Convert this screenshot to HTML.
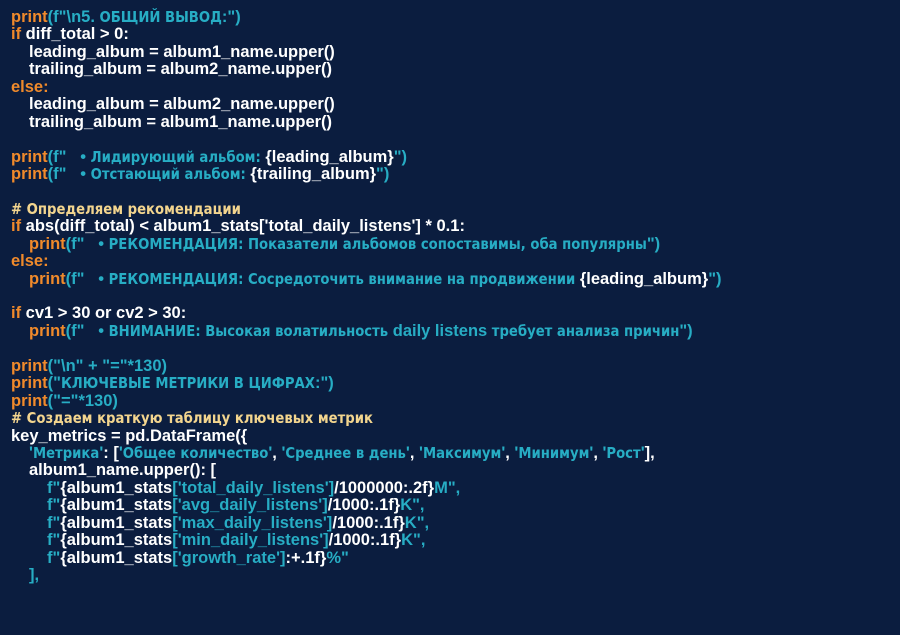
<!DOCTYPE html>
<html><head><meta charset="utf-8"><style>
html,body{margin:0;padding:0;}
body{width:900px;height:635px;background:#0b1d3f;overflow:hidden;font-family:"Liberation Sans",sans-serif;font-weight:bold;font-size:16.5px;color:#fff;}
.code{position:absolute;left:11px;top:9px;}
.l{height:17.44px;line-height:17.44px;white-space:pre;}
.o{color:#f08a2b}
.t{color:#27adc4}
.y{color:#f3d58e}
.c{font-family:"Liberation Sans Narrow","DejaVu Sans Condensed","DejaVu Sans",sans-serif;font-stretch:condensed;font-size:14.7px;}
.i1{padding-left:18px}.i2{padding-left:36px}.i3{padding-left:54px}
</style></head><body><div class="code"><div class="l"><span class="o">print</span><span class="t">(f"\n5. <span class="c">ОБЩИЙ ВЫВОД</span>:")</span></div><div class="l"><span class="o">if</span> diff_total &gt; 0:</div><div class="l i1">leading_album = album1_name.upper()</div><div class="l i1">trailing_album = album2_name.upper()</div><div class="l"><span class="o">else:</span></div><div class="l i1">leading_album = album2_name.upper()</div><div class="l i1">trailing_album = album1_name.upper()</div><div class="l"></div><div class="l"><span class="o">print</span><span class="t">(f"   • <span class="c">Лидирующий альбом:</span> </span>{leading_album}<span class="t">")</span></div><div class="l"><span class="o">print</span><span class="t">(f"   • <span class="c">Отстающий альбом:</span> </span>{trailing_album}<span class="t">")</span></div><div class="l"></div><div class="l y c"># Определяем рекомендации</div><div class="l"><span class="o">if</span> abs(diff_total) &lt; album1_stats['total_daily_listens'] * 0.1:</div><div class="l i1"><span class="o">print</span><span class="t">(f"   • <span class="c">РЕКОМЕНДАЦИЯ: Показатели альбомов сопоставимы, оба популярны</span>")</span></div><div class="l"><span class="o">else:</span></div><div class="l i1"><span class="o">print</span><span class="t">(f"   • <span class="c">РЕКОМЕНДАЦИЯ: Сосредоточить внимание на продвижении</span> </span>{leading_album}<span class="t">")</span></div><div class="l"></div><div class="l"><span class="o">if</span> cv1 &gt; 30 or cv2 &gt; 30:</div><div class="l i1"><span class="o">print</span><span class="t">(f"   • <span class="c">ВНИМАНИЕ: Высокая волатильность</span> daily listens <span class="c">требует анализа причин</span>")</span></div><div class="l"></div><div class="l"><span class="o">print</span><span class="t">("\n" + "="*130)</span></div><div class="l"><span class="o">print</span><span class="t">("<span class="c">КЛЮЧЕВЫЕ МЕТРИКИ В ЦИФРАХ</span>:")</span></div><div class="l"><span class="o">print</span><span class="t">("="*130)</span></div><div class="l y c"># Создаем краткую таблицу ключевых метрик</div><div class="l">key_metrics = pd.DataFrame({</div><div class="l i1"><span class="t">'<span class="c">Метрика</span>'</span>: [<span class="t">'<span class="c">Общее количество</span>'</span>, <span class="t">'<span class="c">Среднее в день</span>'</span>, <span class="t">'<span class="c">Максимум</span>'</span>, <span class="t">'<span class="c">Минимум</span>'</span>, <span class="t">'<span class="c">Рост</span>'</span>],</div><div class="l i1">album1_name.upper(): [</div><div class="l i2"><span class="t">f"</span>{album1_stats<span class="t">['total_daily_listens']</span>/1000000:.2f}<span class="t">M",</span></div><div class="l i2"><span class="t">f"</span>{album1_stats<span class="t">['avg_daily_listens']</span>/1000:.1f}<span class="t">K",</span></div><div class="l i2"><span class="t">f"</span>{album1_stats<span class="t">['max_daily_listens']</span>/1000:.1f}<span class="t">K",</span></div><div class="l i2"><span class="t">f"</span>{album1_stats<span class="t">['min_daily_listens']</span>/1000:.1f}<span class="t">K",</span></div><div class="l i2"><span class="t">f"</span>{album1_stats<span class="t">['growth_rate']</span>:+.1f}<span class="t">%"</span></div><div class="l i1"><span class="t">],</span></div></div></body></html>
